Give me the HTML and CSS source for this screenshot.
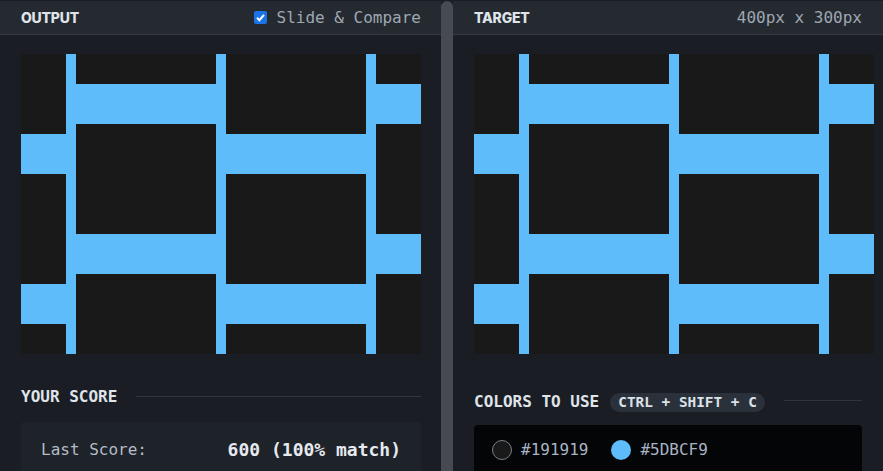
FILE: index.html
```html
<!DOCTYPE html>
<html>
<head>
<meta charset="utf-8">
<link rel="stylesheet" href="styles.css">
</head>
<body>
<div class="app">
  <section class="panel panel-left">
    <header class="panel-head">
      <span class="title">OUTPUT</span>
      <label class="toggle"><span class="check"><svg viewBox="0 0 13 13" width="13" height="13"><path d="M3 6.8 L5.4 9.2 L10 3.8" fill="none" stroke="#fff" stroke-width="2"/></svg></span>Slide &amp; Compare</label>
    </header>
    <div class="panel-body">
      <svg class="art" width="400" height="300" viewBox="0 0 400 300">
        <rect width="400" height="300" fill="#191919"/>
        <g fill="#5DBCF9">
          <rect x="45" y="0" width="10" height="300"/>
          <rect x="195" y="0" width="10" height="300"/>
          <rect x="345" y="0" width="10" height="300"/>
          <rect x="55" y="30" width="140" height="40"/>
          <rect x="355" y="30" width="45" height="40"/>
          <rect x="0" y="80" width="45" height="40"/>
          <rect x="205" y="80" width="140" height="40"/>
          <rect x="55" y="180" width="140" height="40"/>
          <rect x="355" y="180" width="45" height="40"/>
          <rect x="0" y="230" width="45" height="40"/>
          <rect x="205" y="230" width="140" height="40"/>
        </g>
      </svg>
      <div class="section-head score-head">
        <h2>YOUR SCORE</h2>
        <span class="rule"></span>
      </div>
      <div class="score-box">
        <span class="score-label">Last Score:</span>
        <span class="score-value">600 (100% match)</span>
      </div>
    </div>
  </section>
  <div class="divider"></div>
  <section class="panel panel-right">
    <header class="panel-head">
      <span class="title">TARGET</span>
      <span class="dims">400px x 300px</span>
    </header>
    <div class="panel-body">
      <svg class="art" width="400" height="300" viewBox="0 0 400 300">
        <rect width="400" height="300" fill="#191919"/>
        <g fill="#5DBCF9">
          <rect x="45" y="0" width="10" height="300"/>
          <rect x="195" y="0" width="10" height="300"/>
          <rect x="345" y="0" width="10" height="300"/>
          <rect x="55" y="30" width="140" height="40"/>
          <rect x="355" y="30" width="45" height="40"/>
          <rect x="0" y="80" width="45" height="40"/>
          <rect x="205" y="80" width="140" height="40"/>
          <rect x="55" y="180" width="140" height="40"/>
          <rect x="355" y="180" width="45" height="40"/>
          <rect x="0" y="230" width="45" height="40"/>
          <rect x="205" y="230" width="140" height="40"/>
        </g>
      </svg>
      <div class="section-head colors-head">
        <h2>COLORS TO USE</h2>
        <span class="pill">CTRL + SHIFT + C</span>
        <span class="rule"></span>
      </div>
      <div class="colors-box">
        <span class="swatch"><span class="dot dot-dark"></span>#191919</span>
        <span class="swatch"><span class="dot dot-blue"></span>#5DBCF9</span>
      </div>
    </div>
  </section>
</div>
</body>
</html>
```
FILE: styles.css
```css
* { box-sizing: border-box; }
html, body {
  margin: 0;
  padding: 0;
  background: #1a1d23;
  overflow: hidden;
}
.app {
  display: flex;
  width: 883px;
  height: 471px;
  overflow: hidden;
  font-family: "DejaVu Sans Mono", monospace;
}
.panel {
  background: #1a1d23;
  display: flex;
  flex-direction: column;
  min-width: 0;
}
.panel-left { width: 441px; flex: none; }
.panel-right { flex: 1; }
.divider {
  width: 12px;
  flex: none;
  background: #464b53;
  border-radius: 6px 6px 0 0;
  margin-top: 1px;
}
.panel-head {
  flex: none;
  height: 34px;
  margin-top: 1px;
  background: #252a31;
  border-bottom: 1px solid #353b44;
  display: flex;
  align-items: center;
  justify-content: space-between;
  padding: 0 20px 0 21px;
}
.panel-right .panel-head { padding-right: 21px; }
.title {
  font-family: Inter, "Noto Sans", sans-serif;
  font-weight: 800;
  font-size: 14px;
  color: #dfe4ea;
  letter-spacing: -0.2px;
}
.toggle, .dims {
  font-size: 16px;
  color: #9ea7b2;
  display: flex;
  align-items: center;
}
.check {
  width: 13px;
  height: 13px;
  background: #1a73e8;
  border-radius: 2px;
  margin-right: 10px;
  display: flex;
}
.panel-body {
  flex: none;
  padding: 19px 20px 0 21px;
  display: flex;
  flex-direction: column;
}
.panel-right .panel-body { padding-right: 21px; }
.art { display: block; flex: none; }
.section-head {
  flex: none;
  display: flex;
  align-items: center;
}
.section-head h2 {
  margin: 0;
  font-size: 16px;
  font-weight: 700;
  color: #dfe4ea;
  line-height: 20px;
  white-space: nowrap;
}
.rule {
  flex: 1;
  height: 1px;
  background: #2f353e;
}
.score-head { margin-top: 33px; }
.score-head .rule { margin-left: 19px; margin-top: -2px; }
.colors-head { margin-top: 38px; }
.colors-head .rule { margin-left: 19px; margin-top: -3px; }
.pill {
  margin-left: 11px;
  background: #2a313b;
  color: #dbe1e8;
  font-weight: 700;
  font-size: 14.4px;
  line-height: 19px;
  padding: 0 8px;
  border-radius: 10px;
  white-space: nowrap;
}
.score-box {
  flex: none;
  margin-top: 15px;
  height: 60px;
  background: #1e2229;
  border-radius: 4px;
  display: flex;
  justify-content: space-between;
  align-items: flex-start;
  padding: 18px 20px 0 20px;
}
.score-label {
  font-size: 16px;
  color: #b4bcc8;
  line-height: 20px;
}
.score-value {
  font-size: 18px;
  font-weight: 700;
  color: #e6eaf0;
  line-height: 20px;
}
.colors-box {
  flex: none;
  margin-top: 13px;
  height: 60px;
  background: #040506;
  border-radius: 4px;
  display: flex;
  align-items: flex-start;
  gap: 23px;
  padding: 15px 18px 0 18px;
}
.swatch {
  display: flex;
  align-items: center;
  gap: 9px;
  font-size: 16px;
  color: #a8b3c3;
  line-height: 20px;
}
.dot {
  width: 20px;
  height: 20px;
  border-radius: 50%;
  display: block;
}
.dot-dark { background: #191919; border: 1px solid #7a7f86; }
.dot-blue { background: #5DBCF9; }
```
